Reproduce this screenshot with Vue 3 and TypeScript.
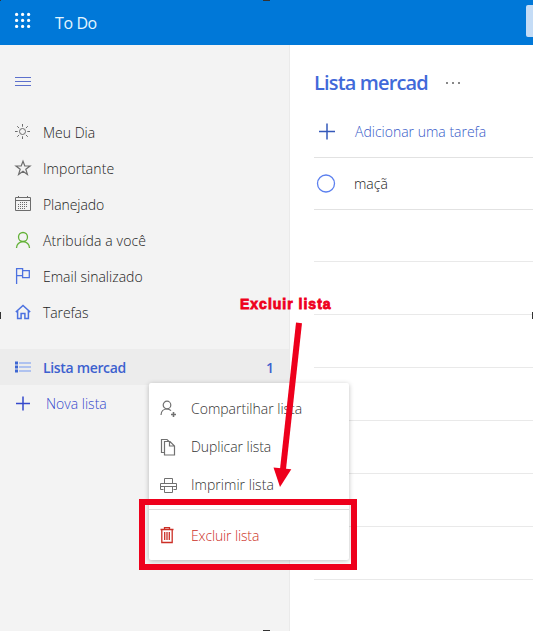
<script setup lang="ts">
interface Item { id: string; label: string; spacing: number }

const nav: Item[] = [
  { id: 'sun', label: 'Meu Dia', spacing: 0 },
  { id: 'star', label: 'Importante', spacing: 0.05 },
  { id: 'calendar', label: 'Planejado', spacing: -0.08 },
  { id: 'person', label: 'Atribuída a você', spacing: 0.14 },
  { id: 'flag', label: 'Email sinalizado', spacing: 0 },
  { id: 'home', label: 'Tarefas', spacing: -0.1 },
]
const menu: Item[] = [
  { id: 'share', label: 'Compartilhar lista', spacing: 0 },
  { id: 'copy', label: 'Duplicar lista', spacing: -0.05 },
  { id: 'print', label: 'Imprimir lista', spacing: 0.03 },
]
const blankRows: number[] = [52, 53, 53, 53, 53, 53, 53]
const dots: number[] = [2, 8, 14]
</script>

<template>
  <div class="page">
    <header class="top">
      <svg class="waffle" width="16" height="16" viewBox="0 0 16 16">
        <template v-for="y in dots" :key="y">
          <circle v-for="x in dots" :key="x" :cx="x - 0.4" :cy="y + 0.4" r="1.6" fill="#fff" />
        </template>
      </svg>
      <span class="brand">To Do</span>
      <span class="search"></span>
    </header>
    <div class="body">
      <aside class="side">
        <div class="burger"><i></i><i></i><i></i></div>
        <nav>
          <div v-for="n in nav" :key="n.id" class="row" :class="n.id">
            <svg width="16" height="16" viewBox="0 0 16 16" fill="none" stroke="currentColor">
              <template v-if="n.id === 'sun'">
                <circle cx="7.5" cy="7.5" r="3" />
                <path d="M7.500 0v2.700M7.500 12.300V15M0 7.500h2.700M12.300 7.500H15M2.200 2.200l1.900 1.900M10.900 10.900l1.900 1.900M2.200 12.800l1.900-1.900M10.900 4.100l1.900-1.900" />
              </template>
              <path v-else-if="n.id === 'star'" d="M8 1.200l1.800 4.800h5.200l-4.200 3.200 1.600 5.200L8 11.300l-4.400 3.100 1.600-5.200L1 6h5.200z" stroke-width="1.200" />
              <template v-else-if="n.id === 'calendar'">
                <path d="M.5 1.500h15v13H.5zM.5 4.500h15M3.500 0v2M12.500 0v2" />
                <path d="M5 6.500h8M3 8.500h10M3 10.500h10M3 12.500h7" stroke-dasharray="1 1" />
              </template>
              <template v-else-if="n.id === 'person'">
                <circle cx="8" cy="5" r="4.500" stroke-width="1.300" />
                <path d="M1.500 16c0-3.700 2.800-6.300 6.500-6.300s6.500 2.600 6.500 6.300" stroke-width="1.300" />
              </template>
              <path v-else-if="n.id === 'flag'" d="M1.600 16V.6h6v7h-6M7.600 2.600h6.700v7H7.600v-2" stroke-width="1.300" />
              <path v-else d="M.8 8L8 1.400 15.200 8M2.600 6.500v8h3.500V9.500h3.800v5h3.500v-8" stroke-width="1.500" />
            </svg>
            <span :style="{ letterSpacing: n.spacing + 'px' }">{{ n.label }}</span>
          </div>
        </nav>
        <div class="row selected">
          <svg width="16" height="12" viewBox="0 0 16 12">
            <path d="M0 .5h3v3H0zM0 4.500h3v3H0zM0 8.500h3v3H0z" fill="#3d66d2" />
            <path d="M4 2h12M4 6h12M4 10h12" stroke="#9bb4f0" stroke-width="1.500" />
          </svg>
          <span>Lista mercad</span><b>1</b>
        </div>
        <div class="row new">
          <svg width="16" height="16" viewBox="0 0 16 16"><path d="M1 8.500h14M8 1.500v14" stroke="currentColor" stroke-width="1.500" /></svg>
          <span>Nova lista</span>
        </div>
      </aside>
      <main>
        <div class="heading"><h1>Lista mercad</h1><span class="more"><i></i><i></i><i></i></span></div>
        <div class="add">
          <svg width="16" height="16" viewBox="0 0 16 16"><path d="M0 8.500h16M8 .5v16" stroke="#3559ba" stroke-width="1.500" /></svg>
          <span>Adicionar uma tarefa</span>
        </div>
        <div class="task">
          <svg width="20" height="20" viewBox="0 0 20 20"><circle cx="10" cy="9.500" r="8.500" fill="none" stroke="#5c80ef" stroke-width="1.300" /></svg>
          <span>maçã</span>
        </div>
        <div v-for="(h, i) in blankRows" :key="i" class="blank" :style="{ height: h + 'px' }"></div>
      </main>
    </div>

    <div class="menu">
      <div v-for="m in menu" :key="m.id" class="option">
        <svg width="17" height="17" viewBox="0 0 17 17" fill="none" stroke="#707070">
          <template v-if="m.id === 'share'">
            <circle cx="7" cy="4" r="3.800" stroke-width="1.200" />
            <path d="M1 14c.2-3.800 2.700-6 6-6 1.700 0 3 .6 4 1.700" stroke-width="1.200" />
            <path d="M13.500 11v5M11 13.500h5" stroke-width="1.600" />
          </template>
          <template v-else-if="m.id === 'copy'">
            <path d="M4.500 13.500h-3V.5h5.500l2 2M4.500 2.500H10l4.500 4.500v9h-10zM9.500 2.500V7h5" stroke-width="1.200" />
          </template>
          <template v-else>
            <path d="M4.500 6.500v-5h8v5M3.500 12.500h-3v-6h16v6h-3M.5 9.500h16M4.500 9.500h8v6h-8z" />
          </template>
        </svg>
        <span :style="{ letterSpacing: m.spacing + 'px' }">{{ m.label }}</span>
      </div>
      <div class="option danger">
        <svg width="17" height="17" viewBox="0 0 17 17" fill="none" stroke="currentColor">
          <path d="M.5 2.500h13M4.500 2.500V.7h5v1.800M1.800 2.500v13h10.400v-13M4.700 5v8M7 5v8M9.300 5v8" stroke-width="1.300" />
        </svg>
        <span>Excluir lista</span>
      </div>
    </div>

    <div class="highlight"></div>
    <svg class="arrow" width="30" height="166" viewBox="0 0 30 166">
      <path d="M27 .8L10.800 149" stroke="#ee001c" stroke-width="6" />
      <path d="M1.500 145.500L19.300 147.300 8 165z" fill="#ee001c" />
    </svg>
    <span class="callout">Excluir lista</span>
    <i class="mark m-corner"></i><i class="mark m-top"></i><i class="mark m-bottom"></i><i class="mark m-left"></i><i class="mark m-right"></i>
  </div>
</template>

<style>
body { margin: 0; overflow: hidden; }
</style>

<style scoped>
* { box-sizing: border-box; }
.page { position: relative; width: 533px; height: 631px; overflow: hidden; display: flex; flex-direction: column; background: #fff; font: 300 14px/20px "Open Sans", "Noto Sans", sans-serif; color: #222; }
span, h1 { white-space: nowrap; }
svg { flex: none; display: block; overflow: visible; }
.top { height: 45px; flex: none; background: #0078d8; display: flex; align-items: center; padding-left: 15px; }
.waffle { margin-top: -5px; }
.brand { color: #e4f6ff; font-size: 16px; font-weight: 400; margin-left: 24px; letter-spacing: -.4px; }
.search { margin-left: auto; align-self: flex-start; margin-top: 5px; width: 7px; height: 32px; background: #c4dcf6; border-radius: 2px 0 0 2px; }
.body { flex: 1; display: flex; }
.side { width: 290px; flex: none; background: #f3f3f3; border-right: 1px solid #eaeaea; padding-top: 32px; }
.burger { height: 37px; padding-left: 15px; display: flex; flex-direction: column; gap: 3px; }
.burger i { width: 16px; height: 1px; background: #5c70cc; }
nav { margin-bottom: 19px; }
.row { height: 36px; display: flex; align-items: center; padding-left: 15px; }
.row svg { margin-right: 12px; }
.row span, .row b { padding-top: 2px; }
.row.sun svg, .row.star svg, .row.calendar svg { color: #6c6c6c; }
.row.person svg { color: #62b136; }
.row.flag svg, .row.home svg { color: #4c71e0; }
.row.selected { background: #ececec; color: #3c61cf; font-weight: 600; padding-right: 15px; }
.row.selected span { letter-spacing: -.33px; }
.row.selected b { margin-left: auto; font-weight: 600; }
.row.new { color: #3549cc; }
.row.new svg { margin-right: 15px; }
main { flex: 1; padding-left: 24px; }
.heading { height: 60px; padding-top: 16px; display: flex; align-items: center; }
h1 { margin: 0; font-size: 20px; line-height: 28px; font-weight: 600; color: #4169d9; letter-spacing: -.85px; }
.more { display: flex; gap: 4px; margin-left: 18px; }
.more i { width: 2px; height: 2px; background: #888; }
.add { height: 53px; display: flex; align-items: center; padding-left: 5px; border-bottom: 1px solid #e2e2e2; color: #365ac8; }
.add span { margin-left: 20px; padding-top: 2px; }
.task { height: 52px; display: flex; align-items: center; padding-left: 2px; border-bottom: 1px solid #e2e2e2; }
.task span { margin-left: 18px; }
.blank { border-bottom: 1px solid #e9e9e9; }
.menu { position: absolute; left: 149px; top: 383px; width: 200px; height: 177px; background: #fff; border-radius: 2px; box-shadow: 0 1px 5px rgba(0,0,0,.25); padding-top: 7px; }
.option { height: 38px; display: flex; align-items: center; padding-left: 11px; color: #333; }
.option span { margin-left: 14px; }
.danger { height: 51px; margin-top: 5px; border-top: 1px solid #ddd; color: #cc2f26; }
.danger span { letter-spacing: -.14px; padding-top: 2px; }
.highlight { position: absolute; left: 139px; top: 499px; width: 218px; height: 71px; border: 6px solid #ee001c; }
.arrow { position: absolute; left: 272px; top: 322px; }
.callout { position: absolute; left: 240px; top: 294px; font: 700 14px/20px "Liberation Sans", sans-serif; color: #ee001c; -webkit-text-stroke: .8px #ee001c; letter-spacing: 1px; }
.mark { position: absolute; background: #333; }
.m-corner { left: 0; top: 0; width: 1px; height: 1px; }
.m-top { left: 263px; top: 0; width: 7px; height: 1px; }
.m-bottom { left: 263px; top: 630px; width: 7px; height: 1px; }
.m-left { left: 0; top: 312px; width: 1px; height: 7px; }
.m-right { left: 532px; top: 312px; width: 1px; height: 7px; }
</style>
